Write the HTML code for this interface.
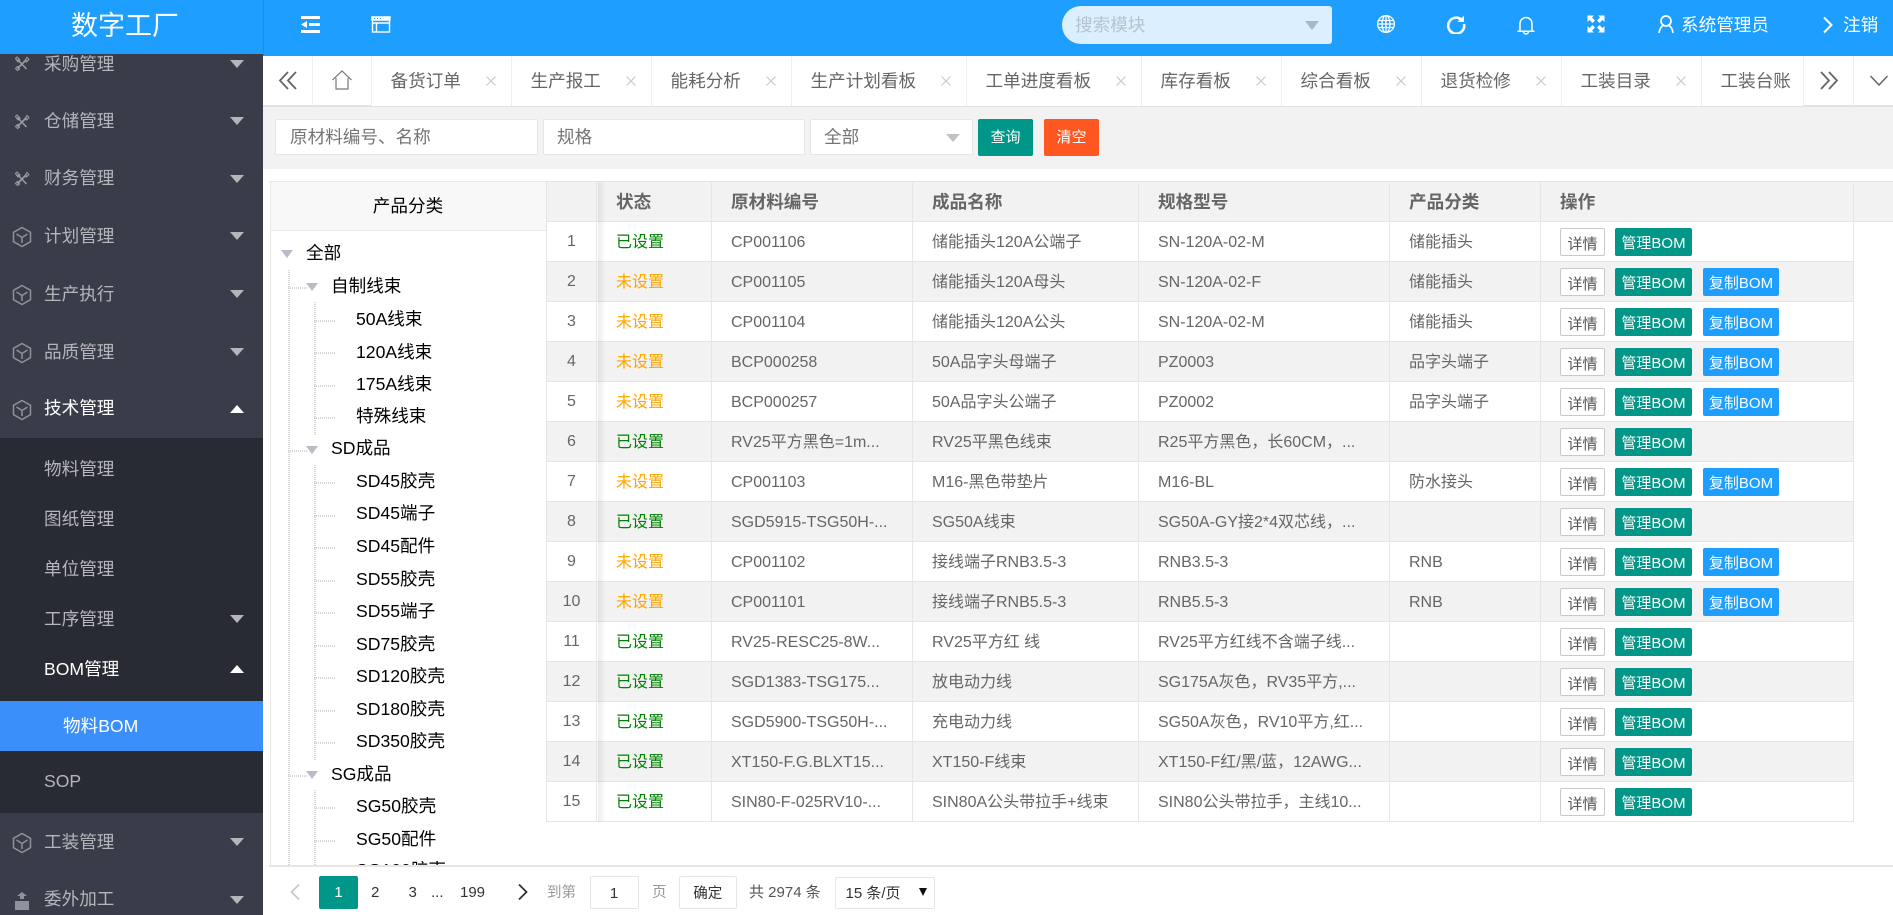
<!DOCTYPE html>
<html lang="zh-CN"><head><meta charset="utf-8"><title>数字工厂</title>
<style>
html,body{margin:0;padding:0;width:1893px;height:915px;overflow:hidden;background:#fff;font-family:"Liberation Sans","Noto Sans CJK SC",sans-serif;}
*{box-sizing:border-box}
.a{position:absolute;white-space:nowrap}
#side{left:0;top:0;width:263px;height:915px;background:#393d49;overflow:hidden}
.m{position:absolute;left:44px;height:40px;line-height:40px;font-size:17.6px;color:#b5b6ba;white-space:nowrap}
.w{color:#fff}
.ar{position:absolute;left:230px;width:0;height:0;border-left:7.5px solid transparent;border-right:7.5px solid transparent;border-top:8px solid #b5b6ba}
.up{border-top:0;border-bottom:8px solid #fff}
.ic{position:absolute;left:11px;width:22px;height:22px;fill:none;stroke:#8f929a;stroke-width:1.5}
.wr{position:absolute;left:14px;width:16px;height:16px;fill:none;stroke:#999ca3;stroke-width:1.5}
.tab{position:absolute;top:56px;height:50px;border-right:1px solid #f0f0f0;background:#fff;color:#666;font-size:17.6px;line-height:50px;padding-left:19px;white-space:nowrap}
.tab svg{position:absolute;top:20px;width:10px;height:10px}
.t{position:absolute;font-size:17.6px;line-height:30px;height:30px;color:#000;white-space:nowrap}
.dv{position:absolute;width:2px;background:repeating-linear-gradient(180deg,#d6d6d6 0 1px,transparent 1px 2px)}
.dh{position:absolute;height:2px;background:repeating-linear-gradient(90deg,#d6d6d6 0 1px,transparent 1px 2px)}
.tri{position:absolute;width:0;height:0;border-left:6px solid transparent;border-right:6px solid transparent;border-top:8px solid #b8bcc6}
table{position:absolute;left:546px;top:181px;border-collapse:collapse;table-layout:fixed;width:1307px;font-size:16px;color:#666}
td,th{border:1px solid #e6e6e6;height:40px;padding:2px 0 0 19px;text-align:left;white-space:nowrap;overflow:hidden;font-weight:400;line-height:20px;vertical-align:middle}
th{font-weight:700;font-size:17.6px;background:#f2f2f2;color:#666;padding-top:0}
td:first-child,th:first-child{padding:1px 0 0;text-align:center}
td:last-child{padding-top:0}
tr:nth-child(odd) td{background:#f2f2f2}
tr.h td{background:#fff}
.g{color:#008000}.o{color:#ffa500}
.b{display:inline-block;height:28px;line-height:31px;border-radius:2px;font-size:15px;color:#fff;text-align:center;vertical-align:middle;margin-right:11px}
.b1{width:45px;background:#fff;border:1px solid #c9c9c9;color:#555;line-height:32px;margin-right:10px}
.b2{width:77px;background:#009688}
.b3{width:76px;background:#1e9fff}
.p{position:absolute;top:876px;height:32px;line-height:33px;font-size:15px;color:#333;white-space:nowrap}
.box{position:absolute;background:#fff;border:1px solid #e6e6e6;border-radius:2px;height:36px;line-height:35px;font-size:17.6px;color:#757575;padding-left:13px;white-space:nowrap}
</style></head><body>
<svg width="0" height="0" style="position:absolute"><defs>
<symbol id="cube" viewBox="0 0 22 22"><path d="M11 1.5 19.5 6.3V15.7L11 20.5 2.5 15.7V6.3Z"/><path d="M5.5 8 11 11.5 16.5 8M11 11.5V17"/></symbol>
<symbol id="tool" viewBox="0 0 16 16"><path d="M3.5 3.5 12.5 13"/><path d="M12.5 3.5 3.5 12.5" stroke-width="1.8"/><path d="M1.5 2.5 3 1 6 4 4 6ZM11 4.5 12.5 6 15 3.5 13 1.5ZM1.5 12.5 3.5 14.5 5.5 13 3.5 10.5Z" stroke-width="1.1"/></symbol>
</defs></svg>

<div class="a" id="side">
<svg class="wr" style="top:56px"><use href="#tool"/></svg><div class="m" style="top:44px">采购管理</div><i class="ar" style="top:60px"></i>
<svg class="wr" style="top:114px"><use href="#tool"/></svg><div class="m" style="top:101px">仓储管理</div><i class="ar" style="top:117px"></i>
<svg class="wr" style="top:171px"><use href="#tool"/></svg><div class="m" style="top:158px">财务管理</div><i class="ar" style="top:175px"></i>
<svg class="ic" style="top:226px"><use href="#cube"/></svg><div class="m" style="top:216px">计划管理</div><i class="ar" style="top:232px"></i>
<svg class="ic" style="top:284px"><use href="#cube"/></svg><div class="m" style="top:274px">生产执行</div><i class="ar" style="top:290px"></i>
<svg class="ic" style="top:342px"><use href="#cube"/></svg><div class="m" style="top:332px">品质管理</div><i class="ar" style="top:348px"></i>
<svg class="ic" style="top:399px"><use href="#cube"/></svg><div class="m w" style="top:388px">技术管理</div><i class="ar up" style="top:405px"></i>
<div class="a" style="left:0;top:438px;width:263px;height:375px;background:#282b33"></div>
<div class="m" style="top:449px">物料管理</div>
<div class="m" style="top:499px">图纸管理</div>
<div class="m" style="top:549px">单位管理</div>
<div class="m" style="top:599px">工序管理</div><i class="ar" style="top:615px"></i>
<div class="m w" style="top:649px">BOM管理</div><i class="ar up" style="top:665px"></i>
<div class="a" style="left:0;top:701px;width:263px;height:50px;background:#3b8ffb"></div>
<div class="m w" style="top:706px;left:63px">物料BOM</div>
<div class="m" style="top:761px">SOP</div>
<svg class="ic" style="top:832px"><use href="#cube"/></svg><div class="m" style="top:822px">工装管理</div><i class="ar" style="top:838px"></i>
<svg class="ic" style="top:890px;fill:#8f929a;stroke:none" viewBox="0 0 22 22"><path d="M11 2l5 4-3 0v3h-4V6H6zM4 11h14v9H4z"/></svg><div class="m" style="top:879px">委外加工</div><i class="ar" style="top:896px"></i>
</div>

<div class="a" style="left:0;top:0;width:263px;height:54px;background:#1e9fff"></div>
<div class="a" style="left:0;top:0;width:250px;height:54px;color:#fff;font-size:27px;line-height:52px;text-align:center;z-index:2">数字工厂</div>
<div class="a" style="left:263px;top:0;width:1630px;height:56px;background:#1e9fff;border-left:1px solid #1a90e8"></div>

<svg class="a" style="left:300px;top:14px" width="22" height="20" viewBox="0 0 22 20" fill="#fff"><rect x="1" y="2" width="19" height="3"/><rect x="9" y="9" width="11" height="3"/><rect x="1" y="16" width="19" height="3"/><path d="M1 10.5 7 7v7z"/></svg>
<svg class="a" style="left:370px;top:15px" width="22" height="19" viewBox="0 0 22 19" fill="none" stroke="#fff" stroke-width="1.4"><path d="M2 2H20V5H2Z" fill="#fff"/><rect x="2.5" y="2.5" width="17" height="14.5"/><path d="M2.5 8H19.5M6.5 8V17"/><path d="M4 3.5h1M7 3.5h1M10 3.5h1" stroke="#1e9fff" stroke-width="1"/></svg>

<div class="a" style="left:1062px;top:6px;width:270px;height:38px;background:#dcefff;border-radius:19px 3px 3px 19px"></div>
<div class="a" style="left:1075px;top:9px;font-size:17.6px;line-height:32px;color:#b4c3cf">搜索模块</div>
<div class="a" style="left:1305px;top:21px;width:0;height:0;border-left:7.5px solid transparent;border-right:7.5px solid transparent;border-top:9px solid #a9b8c4"></div>

<svg class="a" style="left:1376px;top:14px" width="20" height="20" viewBox="0 0 20 20" fill="none" stroke="#fff" stroke-width="1.3"><circle cx="10" cy="10" r="8.4"/><ellipse cx="10" cy="10" rx="4" ry="8.4"/><path d="M10 1.5V18.5M2 6.5H18M1.6 10H18.4M2 13.5H18"/></svg>
<svg class="a" style="left:1446px;top:14px" width="20" height="20" viewBox="0 0 20 20" fill="none" stroke="#fff" stroke-width="2.6"><path d="M16 6.2A8 8 0 1 0 18 10"/><path d="M18 1.5V8H11.5Z" fill="#fff" stroke="none"/></svg>
<svg class="a" style="left:1516px;top:15px" width="20" height="20" viewBox="0 0 20 20" fill="none" stroke="#fff" stroke-width="1.5"><path d="M4 16V8.5A6 6 0 0 1 16 8.5V16M1.5 16.2H18.5"/><path d="M7.5 16.5A2.5 2.5 0 0 0 12.5 16.5"/></svg>
<svg class="a" style="left:1586px;top:14px" width="20" height="20" viewBox="0 0 20 20" fill="#fff"><path d="M1.5 1.5H8L6 3.5 9 6.5 6.5 9 3.5 6 1.5 8ZM18.5 1.5V8L16.5 6 13.5 9 11 6.5 14 3.5 12 1.5ZM1.5 18.5V12L3.5 14 6.5 11 9 13.5 6 16.5 8 18.5ZM18.5 18.5H12L14 16.5 11 13.5 13.5 11 16.5 14 18.5 12Z"/></svg>
<svg class="a" style="left:1656px;top:14px" width="20" height="20" viewBox="0 0 20 20" fill="none" stroke="#fff" stroke-width="1.7"><circle cx="10" cy="7" r="5"/><path d="M7 11.5C4.5 13 3.5 15.5 3 19M13 11.5C15.5 13 16.5 15.5 17 19"/></svg>
<div class="a" style="left:1681px;top:9px;font-size:17.6px;line-height:32px;color:#fff">系统管理员</div>
<svg class="a" style="left:1822px;top:16px" width="12" height="18" viewBox="0 0 12 18" fill="none" stroke="#fff" stroke-width="2"><path d="M2 1.5 9.5 9 2 16.5"/></svg>
<div class="a" style="left:1843px;top:9px;font-size:17.6px;line-height:32px;color:#fff">注销</div>

<div class="a" style="left:263px;top:56px;width:1630px;height:50px;background:#fff"></div>
<div class="a" style="left:263px;top:105px;width:1630px;height:2px;background:#e2e2e2"></div>
<div class="a" style="left:312px;top:56px;width:1px;height:50px;background:#f0f0f0"></div>
<div class="a" style="left:371px;top:56px;width:1px;height:50px;background:#f0f0f0"></div>
<svg class="a" style="left:278px;top:70px" width="20" height="20" viewBox="0 0 20 20" fill="none" stroke="#666" stroke-width="1.8"><path d="M10 2 2 10.5 10 19M18 2 10 10.5 18 19"/></svg>
<svg class="a" style="left:331px;top:69px" width="22" height="22" viewBox="0 0 22 22" fill="none" stroke="#777" stroke-width="1.2"><path d="M1.5 11 11 2 20.5 11M5 9V20H17V9M5 20H17"/></svg>

<div class="tab" style="left:371.5px;width:140px">备货订单<svg style="left:114px" viewBox="0 0 10 10" stroke="#c8c8c8" stroke-width="1.1"><path d="M.5.5 9.5 9.5M9.5.5.5 9.5"/></svg></div>
<div class="tab" style="left:511.5px;width:140px">生产报工<svg style="left:114px" viewBox="0 0 10 10" stroke="#c8c8c8" stroke-width="1.1"><path d="M.5.5 9.5 9.5M9.5.5.5 9.5"/></svg></div>
<div class="tab" style="left:651.5px;width:140px">能耗分析<svg style="left:114px" viewBox="0 0 10 10" stroke="#c8c8c8" stroke-width="1.1"><path d="M.5.5 9.5 9.5M9.5.5.5 9.5"/></svg></div>
<div class="tab" style="left:791.5px;width:175px">生产计划看板<svg style="left:149px" viewBox="0 0 10 10" stroke="#c8c8c8" stroke-width="1.1"><path d="M.5.5 9.5 9.5M9.5.5.5 9.5"/></svg></div>
<div class="tab" style="left:966.5px;width:175px">工单进度看板<svg style="left:149px" viewBox="0 0 10 10" stroke="#c8c8c8" stroke-width="1.1"><path d="M.5.5 9.5 9.5M9.5.5.5 9.5"/></svg></div>
<div class="tab" style="left:1141.5px;width:140px">库存看板<svg style="left:114px" viewBox="0 0 10 10" stroke="#c8c8c8" stroke-width="1.1"><path d="M.5.5 9.5 9.5M9.5.5.5 9.5"/></svg></div>
<div class="tab" style="left:1281.5px;width:140px">综合看板<svg style="left:114px" viewBox="0 0 10 10" stroke="#c8c8c8" stroke-width="1.1"><path d="M.5.5 9.5 9.5M9.5.5.5 9.5"/></svg></div>
<div class="tab" style="left:1421.5px;width:140px">退货检修<svg style="left:114px" viewBox="0 0 10 10" stroke="#c8c8c8" stroke-width="1.1"><path d="M.5.5 9.5 9.5M9.5.5.5 9.5"/></svg></div>
<div class="tab" style="left:1561.5px;width:140px">工装目录<svg style="left:114px" viewBox="0 0 10 10" stroke="#c8c8c8" stroke-width="1.1"><path d="M.5.5 9.5 9.5M9.5.5.5 9.5"/></svg></div>
<div class="tab" style="left:1701.5px;width:102px">工装台账</div>
<div class="a" style="left:1853px;top:56px;width:1px;height:50px;background:#f0f0f0"></div>
<svg class="a" style="left:1819px;top:70px" width="20" height="20" viewBox="0 0 20 20" fill="none" stroke="#666" stroke-width="1.8"><path d="M2 2 10 10.5 2 19M10 2 18 10.5 10 19"/></svg>
<svg class="a" style="left:1869px;top:74px" width="20" height="13" viewBox="0 0 20 13" fill="none" stroke="#666" stroke-width="1.5"><path d="M1.5 2 10 11 18.5 2"/></svg>

<div class="a" style="left:263px;top:107px;width:1630px;height:62px;background:#f2f2f2"></div>
<div class="box" style="left:275px;top:119px;width:262.5px;padding-left:14px">原材料编号、名称</div>
<div class="box" style="left:543px;top:119px;width:261.5px">规格</div>
<div class="box" style="left:810px;top:119px;width:162.5px">全部</div>
<div class="a" style="left:945.5px;top:134px;width:0;height:0;border-left:7.5px solid transparent;border-right:7.5px solid transparent;border-top:8px solid #c2c2c2"></div>
<div class="a" style="left:978px;top:118.5px;width:55px;height:37.5px;background:#009688;border-radius:2px;color:#fff;font-size:15px;line-height:38px;text-align:center">查询</div>
<div class="a" style="left:1044px;top:118.5px;width:55px;height:37.5px;background:#ff5722;border-radius:2px;color:#fff;font-size:15px;line-height:38px;text-align:center">清空</div>

<div class="a" style="left:270px;top:181px;width:277px;height:50px;background:#f8f8f8;border:1px solid #e8e8e8;font-size:17.6px;line-height:48px;text-align:center;color:#000;padding-right:1px">产品分类</div>
<div class="a" style="left:270px;top:231px;width:1px;height:634px;background:#e8e8e8"></div>

<div class="a" style="left:269px;top:231px;width:278px;height:634px;overflow:hidden">
<div class="dv" style="left:19px;top:39px;height:595px"></div>
<div class="dv" style="left:45px;top:71px;height:133px"></div>
<div class="dv" style="left:45px;top:234px;height:295px"></div>
<div class="dv" style="left:45px;top:559px;height:75px"></div>
<div class="dh" style="left:19px;top:56px;width:19px"></div>
<div class="dh" style="left:19px;top:219px;width:19px"></div>
<div class="dh" style="left:19px;top:544px;width:19px"></div>
<div class="dh" style="left:45px;top:89px;width:22px"></div>
<div class="dh" style="left:45px;top:121px;width:22px"></div>
<div class="dh" style="left:45px;top:154px;width:22px"></div>
<div class="dh" style="left:45px;top:186px;width:22px"></div>
<div class="dh" style="left:45px;top:251px;width:22px"></div>
<div class="dh" style="left:45px;top:284px;width:22px"></div>
<div class="dh" style="left:45px;top:316px;width:22px"></div>
<div class="dh" style="left:45px;top:349px;width:22px"></div>
<div class="dh" style="left:45px;top:381px;width:22px"></div>
<div class="dh" style="left:45px;top:414px;width:22px"></div>
<div class="dh" style="left:45px;top:446px;width:22px"></div>
<div class="dh" style="left:45px;top:479px;width:22px"></div>
<div class="dh" style="left:45px;top:511px;width:22px"></div>
<div class="dh" style="left:45px;top:576px;width:22px"></div>
<div class="dh" style="left:45px;top:609px;width:22px"></div>
<i class="tri" style="left:12px;top:19px"></i>
<i class="tri" style="left:37px;top:52px"></i>
<i class="tri" style="left:37px;top:215px"></i>
<i class="tri" style="left:37px;top:540px"></i>
<div class="t" style="left:37px;top:7px">全部</div>
<div class="t" style="left:62px;top:40px">自制线束</div>
<div class="t" style="left:87px;top:73px">50A线束</div>
<div class="t" style="left:87px;top:106px">120A线束</div>
<div class="t" style="left:87px;top:138px">175A线束</div>
<div class="t" style="left:87px;top:170px">特殊线束</div>
<div class="t" style="left:62px;top:202px">SD成品</div>
<div class="t" style="left:87px;top:235px">SD45胶壳</div>
<div class="t" style="left:87px;top:267px">SD45端子</div>
<div class="t" style="left:87px;top:300px">SD45配件</div>
<div class="t" style="left:87px;top:333px">SD55胶壳</div>
<div class="t" style="left:87px;top:365px">SD55端子</div>
<div class="t" style="left:87px;top:398px">SD75胶壳</div>
<div class="t" style="left:87px;top:430px">SD120胶壳</div>
<div class="t" style="left:87px;top:463px">SD180胶壳</div>
<div class="t" style="left:87px;top:495px">SD350胶壳</div>
<div class="t" style="left:62px;top:528px">SG成品</div>
<div class="t" style="left:87px;top:560px">SG50胶壳</div>
<div class="t" style="left:87px;top:593px">SG50配件</div>
<div class="t" style="left:87px;top:624px">SG120胶壳</div>
</div>

<div class="a" style="left:546px;top:181px;width:1347px;height:41px;background:#f2f2f2;border-top:1px solid #e6e6e6;border-bottom:1px solid #e6e6e6"></div>
<table><colgroup><col style="width:50px"><col style="width:115px"><col style="width:201px"><col style="width:226px"><col style="width:251px"><col style="width:151px"><col style="width:313px"></colgroup>
<tbody>
<tr class="h"><th></th><th>状态</th><th>原材料编号</th><th>成品名称</th><th>规格型号</th><th>产品分类</th><th>操作</th></tr>
<tr><td>1</td><td class="g">已设置</td><td>CP001106</td><td>储能插头120A公端子</td><td>SN-120A-02-M</td><td>储能插头</td><td><span class="b b1">详情</span><span class="b b2">管理BOM</span></td></tr>
<tr><td>2</td><td class="o">未设置</td><td>CP001105</td><td>储能插头120A母头</td><td>SN-120A-02-F</td><td>储能插头</td><td><span class="b b1">详情</span><span class="b b2">管理BOM</span><span class="b b3">复制BOM</span></td></tr>
<tr><td>3</td><td class="o">未设置</td><td>CP001104</td><td>储能插头120A公头</td><td>SN-120A-02-M</td><td>储能插头</td><td><span class="b b1">详情</span><span class="b b2">管理BOM</span><span class="b b3">复制BOM</span></td></tr>
<tr><td>4</td><td class="o">未设置</td><td>BCP000258</td><td>50A品字头母端子</td><td>PZ0003</td><td>品字头端子</td><td><span class="b b1">详情</span><span class="b b2">管理BOM</span><span class="b b3">复制BOM</span></td></tr>
<tr><td>5</td><td class="o">未设置</td><td>BCP000257</td><td>50A品字头公端子</td><td>PZ0002</td><td>品字头端子</td><td><span class="b b1">详情</span><span class="b b2">管理BOM</span><span class="b b3">复制BOM</span></td></tr>
<tr><td>6</td><td class="g">已设置</td><td>RV25平方黑色=1m...</td><td>RV25平黑色线束</td><td>R25平方黑色，长60CM，...</td><td></td><td><span class="b b1">详情</span><span class="b b2">管理BOM</span></td></tr>
<tr><td>7</td><td class="o">未设置</td><td>CP001103</td><td>M16-黑色带垫片</td><td>M16-BL</td><td>防水接头</td><td><span class="b b1">详情</span><span class="b b2">管理BOM</span><span class="b b3">复制BOM</span></td></tr>
<tr><td>8</td><td class="g">已设置</td><td>SGD5915-TSG50H-...</td><td>SG50A线束</td><td>SG50A-GY接2*4双芯线，...</td><td></td><td><span class="b b1">详情</span><span class="b b2">管理BOM</span></td></tr>
<tr><td>9</td><td class="o">未设置</td><td>CP001102</td><td>接线端子RNB3.5-3</td><td>RNB3.5-3</td><td>RNB</td><td><span class="b b1">详情</span><span class="b b2">管理BOM</span><span class="b b3">复制BOM</span></td></tr>
<tr><td>10</td><td class="o">未设置</td><td>CP001101</td><td>接线端子RNB5.5-3</td><td>RNB5.5-3</td><td>RNB</td><td><span class="b b1">详情</span><span class="b b2">管理BOM</span><span class="b b3">复制BOM</span></td></tr>
<tr><td>11</td><td class="g">已设置</td><td>RV25-RESC25-8W...</td><td>RV25平方红 线</td><td>RV25平方红线不含端子线...</td><td></td><td><span class="b b1">详情</span><span class="b b2">管理BOM</span></td></tr>
<tr><td>12</td><td class="g">已设置</td><td>SGD1383-TSG175...</td><td>放电动力线</td><td>SG175A灰色，RV35平方,...</td><td></td><td><span class="b b1">详情</span><span class="b b2">管理BOM</span></td></tr>
<tr><td>13</td><td class="g">已设置</td><td>SGD5900-TSG50H-...</td><td>充电动力线</td><td>SG50A灰色，RV10平方,红...</td><td></td><td><span class="b b1">详情</span><span class="b b2">管理BOM</span></td></tr>
<tr><td>14</td><td class="g">已设置</td><td>XT150-F.G.BLXT15...</td><td>XT150-F线束</td><td>XT150-F红/黑/蓝，12AWG...</td><td></td><td><span class="b b1">详情</span><span class="b b2">管理BOM</span></td></tr>
<tr><td>15</td><td class="g">已设置</td><td>SIN80-F-025RV10-...</td><td>SIN80A公头带拉手+线束</td><td>SIN80公头带拉手，主线10...</td><td></td><td><span class="b b1">详情</span><span class="b b2">管理BOM</span></td></tr>
</tbody></table>
<div class="a" style="left:598px;top:182px;width:8px;height:640px;background:linear-gradient(to right,rgba(0,0,0,.07),rgba(0,0,0,0))"></div>

<div class="a" style="left:269px;top:865px;width:1624px;height:2px;background:#e6e6e6"></div>
<svg class="a" style="left:289px;top:883px" width="12" height="18" viewBox="0 0 12 18" fill="none" stroke="#c9c9c9" stroke-width="1.8"><path d="M10 1.5 2.5 9 10 16.5"/></svg>
<div class="a" style="left:319px;top:876px;width:39px;height:33px;background:#009688;border-radius:2px;color:#fff;font-size:15px;line-height:33px;text-align:center">1</div>
<div class="p" style="left:371px">2</div>
<div class="p" style="left:408.5px">3</div>
<div class="p" style="left:431px">...</div>
<div class="p" style="left:460px">199</div>
<svg class="a" style="left:517px;top:883px" width="12" height="18" viewBox="0 0 12 18" fill="none" stroke="#333" stroke-width="1.8"><path d="M2 1.5 9.5 9 2 16.5"/></svg>
<div class="p" style="left:547px;color:#999;font-size:14.5px;top:877px">到第</div>
<div class="a" style="left:589.5px;top:876px;width:49px;height:33px;border:1px solid #e6e6e6;border-radius:2px;font-size:15px;line-height:34px;text-align:center;color:#333">1</div>
<div class="p" style="left:652px;color:#999;font-size:14.5px;top:877px">页</div>
<div class="a" style="left:679px;top:876px;width:57.5px;height:33px;border:1px solid #e6e6e6;border-radius:2px;font-size:14.5px;line-height:34px;text-align:center;color:#333">确定</div>
<div class="p" style="left:749px;color:#555">共 2974 条</div>
<div class="a" style="left:834.5px;top:876.5px;width:100px;height:32px;border:1px solid #e6e6e6;border-radius:2px;font-size:15px;line-height:32px;padding-left:10px;color:#333">15 条/页</div>
<div class="a" style="left:919px;top:888px;width:0;height:0;border-left:4px solid transparent;border-right:4px solid transparent;border-top:8px solid #111"></div>
</body></html>
